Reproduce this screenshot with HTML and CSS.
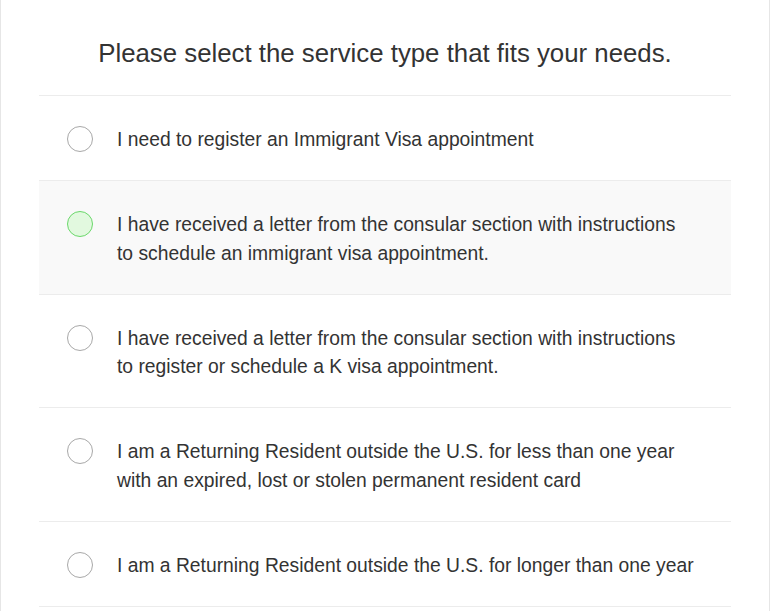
FILE: index.html
```html
<!DOCTYPE html>
<html lang="en">
<head>
    <meta charset="UTF-8">
    <meta name="viewport" content="width=device-width, initial-scale=1.0">
    <title>Service type</title>
    <link rel="stylesheet" href="styles.css">
</head>
<body>

<div class="service-panel">
    <h2>Please select the service type that fits your needs.</h2>
    <ul class="service-list">
        <li class="service-item">
            <span class="radio"></span>
            <span class="label">I need to register an Immigrant Visa appointment</span>
        </li>
        <li class="service-item selected">
            <span class="radio"></span>
            <span class="label">I have received a letter from the consular section with instructions to schedule an immigrant visa appointment.</span>
        </li>
        <li class="service-item">
            <span class="radio"></span>
            <span class="label">I have received a letter from the consular section with instructions to register or schedule a K visa appointment.</span>
        </li>
        <li class="service-item">
            <span class="radio"></span>
            <span class="label">I am a Returning Resident outside the U.S. for less than one year with an expired, lost or stolen permanent resident card</span>
        </li>
        <li class="service-item">
            <span class="radio"></span>
            <span class="label">I am a Returning Resident outside the U.S. for longer than one year</span>
        </li>
    </ul>
</div>

</body>
</html>
```

FILE: styles.css
```css
body {
    margin: 0;
    background: #fff;
    font-family: 'Liberation Sans', Arial, sans-serif;
    color: #333;
}
.service-panel {
    border-left: 1px solid #e6e6e6;
    border-right: 1px solid #e6e6e6;
    padding: 0 38px 0 38px;
    min-height: 611px;
    box-sizing: border-box;
}
.service-panel h2 {
    margin: 0;
    padding: 38px 0 26px;
    font-size: 25.8px;
    font-weight: normal;
    line-height: 31px;
    text-align: center;
    color: #333;
}
.service-list {
    list-style: none;
    margin: 0;
    padding: 0;
    border-top: 1px solid #ececec;
}
.service-item {
    display: flex;
    align-items: flex-start;
    gap: 24px;
    padding: 30px 35px 25.5px 28px;
    border-bottom: 1px solid #ececec;
    font-size: 19.3px;
    line-height: 28.5px;
}
.service-item.selected {
    background-color: #f9f9f9;
}
.radio {
    flex: none;
    width: 24px;
    height: 24px;
    margin-top: 0;
    border: 1.5px solid #a8a8a8;
    border-radius: 50%;
    background: #fff;
}
.selected .radio {
    border-color: #6ad86a;
    background: #e2f9df;
}
```
